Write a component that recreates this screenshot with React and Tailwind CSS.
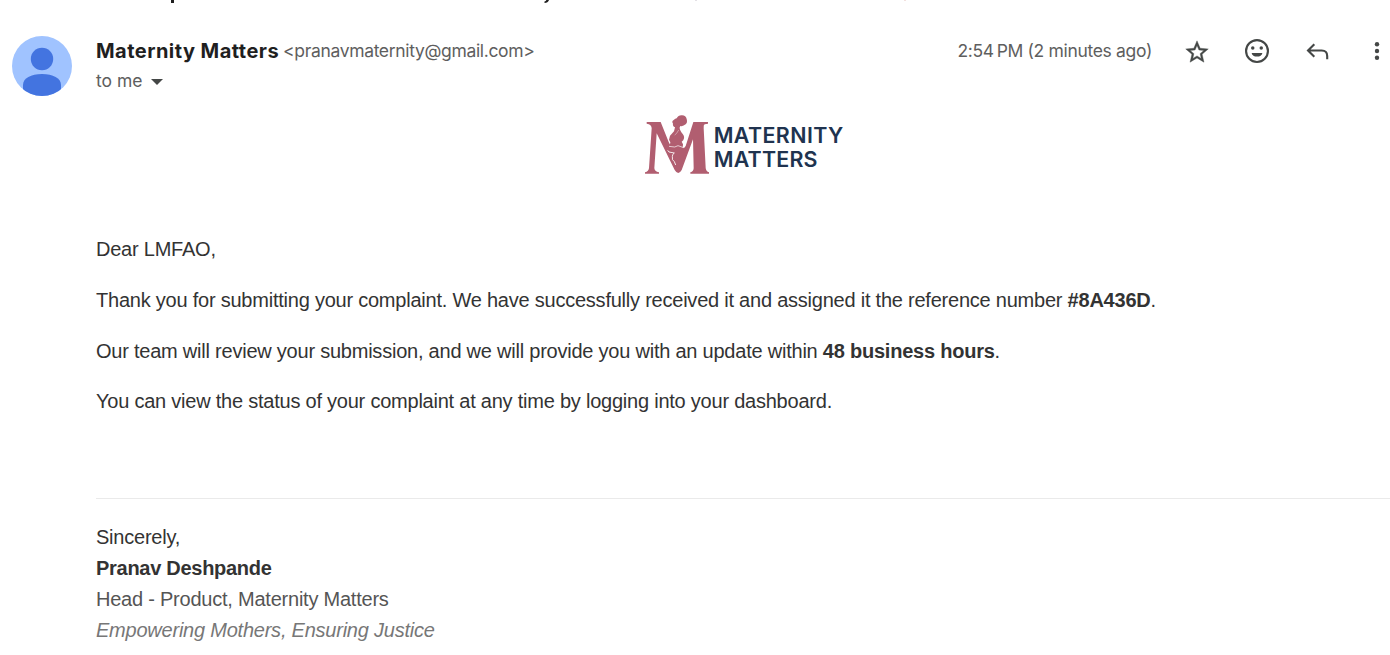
function SubjectRow() {
  return (
    <div className="flex h-[18px] overflow-hidden">
      <div className="ml-[171px] h-[3px] w-[3px] bg-[#1f1f1f]" />
      <svg className="ml-[370px] h-[3px] w-[6px]" viewBox="0 0 6 3">
        <path d="M2.4 0H5Q4 3 .5 3V1.4Q1.9 1.4 2.4 0Z" fill="#1f1f1f" />
      </svg>
      <div className="ml-[145px] h-px w-[2px] bg-[#e4e1e6]" />
      <div className="ml-[207px] h-px w-[2px] bg-[#f2e1df]" />
    </div>
  );
}

function Avatar() {
  return (
    <svg className="mt-[18px] size-[60px] shrink-0" viewBox="0 0 60 60">
      <defs>
        <clipPath id="avatar-disc">
          <circle cx="30" cy="30" r="30" />
        </clipPath>
      </defs>
      <circle cx="30" cy="30" r="30" fill="#a0c3ff" />
      <g fill="#4374e0" clipPath="url(#avatar-disc)">
        <circle cx="30" cy="23" r="11.2" />
        <path d="M11 60V49C11 42 19 38 30 38S49 42 49 49V60Z" />
      </g>
    </svg>
  );
}

function Header() {
  return (
    <header className="flex h-[78px] pl-3 font-['Inter',sans-serif]">
      <Avatar />
      <div className="ml-6 mt-[18px] flex flex-col whitespace-nowrap">
        <div className="flex h-[30px] items-center">
          <span className="w-[187px] text-[20px] font-bold tracking-[0.46px] text-[#1f1f1f]">Maternity Matters</span>
          <span className="text-[17.5px] tracking-[-0.33px] text-[#5e5e5e]">&lt;pranavmaternity@gmail.com&gt;</span>
        </div>
        <div className="flex h-[30px] items-center gap-2 text-[17.5px] text-[#5e5e5e]">
          <span>to me</span>
          <svg className="mt-px h-[6px] w-3" viewBox="0 0 12 6">
            <path d="M0 0H12L6 6Z" fill="#444746" />
          </svg>
        </div>
      </div>
      <div className="ml-auto mt-[18px] flex h-[30px] items-center text-[#444746]">
        <span className="mr-[30px] whitespace-nowrap text-[17.5px] tracking-[-0.33px] text-[#5e5e5e]">2:54&#8239;PM (2 minutes ago)</span>
        <svg className="mr-[30px] size-[30px]" viewBox="0 0 24 24" fill="currentColor" stroke="currentColor" strokeWidth=".35">
          <path d="M22 9.74l-7.19-.62L12 2.5 9.19 9.13 2 9.74l5.46 4.73L5.82 21.5 12 17.77l6.18 3.73-1.63-7.03L22 9.74zM12 15.9l-3.76 2.27 1-4.28-3.32-2.88 4.38-.38L12 6.6l1.71 4.04 4.38.38-3.32 2.88 1 4.28L12 15.9z" transform="translate(1.2 1.6) scale(.9)" />
        </svg>
        <svg className="mr-[30px] size-[30px]" viewBox="0 0 24 24" fill="currentColor">
          <path fillRule="evenodd" d="M12 2.4a9.6 9.6 0 1 0 0 19.2 9.6 9.6 0 0 0 0-19.2zm0 1.7a7.9 7.9 0 1 1 0 15.8 7.9 7.9 0 0 1 0-15.8z" />
          <circle cx="8.6" cy="9.6" r="1.4" />
          <circle cx="15.4" cy="9.6" r="1.4" />
          <path d="M7.7 13.5h8.6a4.4 3.8 0 0 1-8.6 0z" />
        </svg>
        <svg className="mr-[30px] size-[30px]" viewBox="0 0 30 30" fill="none" stroke="currentColor" strokeWidth="2.1">
          <path d="M12.3 8.2 6 14.5l6.3 6.3M6 14.5H19.7Q25.2 14.5 25.2 20V23.3" />
        </svg>
        <svg className="mr-[-2px] h-[30px] w-[30px]" viewBox="0 0 30 30" fill="currentColor">
          <circle cx="15" cy="8.2" r="2.2" />
          <circle cx="15" cy="15" r="2.2" />
          <circle cx="15" cy="21.8" r="2.2" />
        </svg>
      </div>
    </header>
  );
}

function Logo() {
  return (
    <div className="ml-[645px] flex h-20 pt-[5px]">
      <svg className="h-[68px] w-[68.7px] shrink-0" viewBox="15 0 206 204">
        <path
          d="M20 36H62L86 96 91 106 90 112 133 113 137 108 160 36H204V41L194 43Q190 45 191 55L197 174Q198 184 207 187V191H151V187Q161 184 161 174L159 88 125 180Q115 198 104 180L50 70 43 174Q43 184 57 187V191H15V187Q26 184 27 174L35 55Q35 43 20 41Z"
          fill="#b15e70"
        />
        <path
          d="M99 41Q94 34 101 30 106 25 110 25 115 15 126 16 138 17 140 27 143 38 137 43 129 50 121 48 117 53 120 59L124 67Q134 78 132 85 131 92 125 95L129 103 128 114 88 114 91 97 87 89 90 77 102 64 105 52Q97 48 99 41Z"
          fill="#b15e70"
        />
        <path d="M116 60Q110 72 104 75" fill="none" stroke="white" strokeWidth="1.2" />
        <path d="M87 109 104 111 114 107 131 113" fill="none" stroke="white" strokeWidth="2" />
        <path d="M83 121 87 126 103 129Q97 132 97 139 95 151 103 155L107 165" fill="none" stroke="white" strokeWidth="2.6" />
      </svg>
      <div className="flex flex-col whitespace-nowrap pt-[13px] font-['Inter',sans-serif] text-[21.4px] font-semibold leading-[24px] text-[#20334f]">
        <span className="tracking-[0.42px]">MATERNITY</span>
        <span className="tracking-[0.22px]">MATTERS</span>
      </div>
    </div>
  );
}

export default function App() {
  return (
    <div className="h-[655px] w-[1390px] overflow-hidden bg-white">
      <SubjectRow />
      <Header />
      <div className="mt-[9px]">
        <Logo />
      </div>
      <main className="ml-24 whitespace-nowrap font-['Liberation_Sans',Arial,sans-serif] text-[20px] leading-[31px] tracking-[-0.227px] text-[#333]">
        <div className="mt-[49px] flex h-[264px] flex-col gap-[19.75px]">
          <p>Dear LMFAO,</p>
          <p>
            Thank you for submitting your complaint. We have successfully received it and assigned it the reference number <strong>#8A436D</strong>.
          </p>
          <p>
            Our team will review your submission, and we will provide you with an update within <strong>48 business hours</strong>.
          </p>
          <p>You can view the status of your complaint at any time by logging into your dashboard.</p>
        </div>
        <footer className="border-t border-[#eaeaea] pt-[23px]">
          <p>Sincerely,</p>
          <p className="font-bold tracking-[-0.28px]">Pranav Deshpande</p>
          <p className="text-[#555]">Head - Product, Maternity Matters</p>
          <p className="italic text-[#777]">Empowering Mothers, Ensuring Justice</p>
        </footer>
      </main>
    </div>
  );
}
